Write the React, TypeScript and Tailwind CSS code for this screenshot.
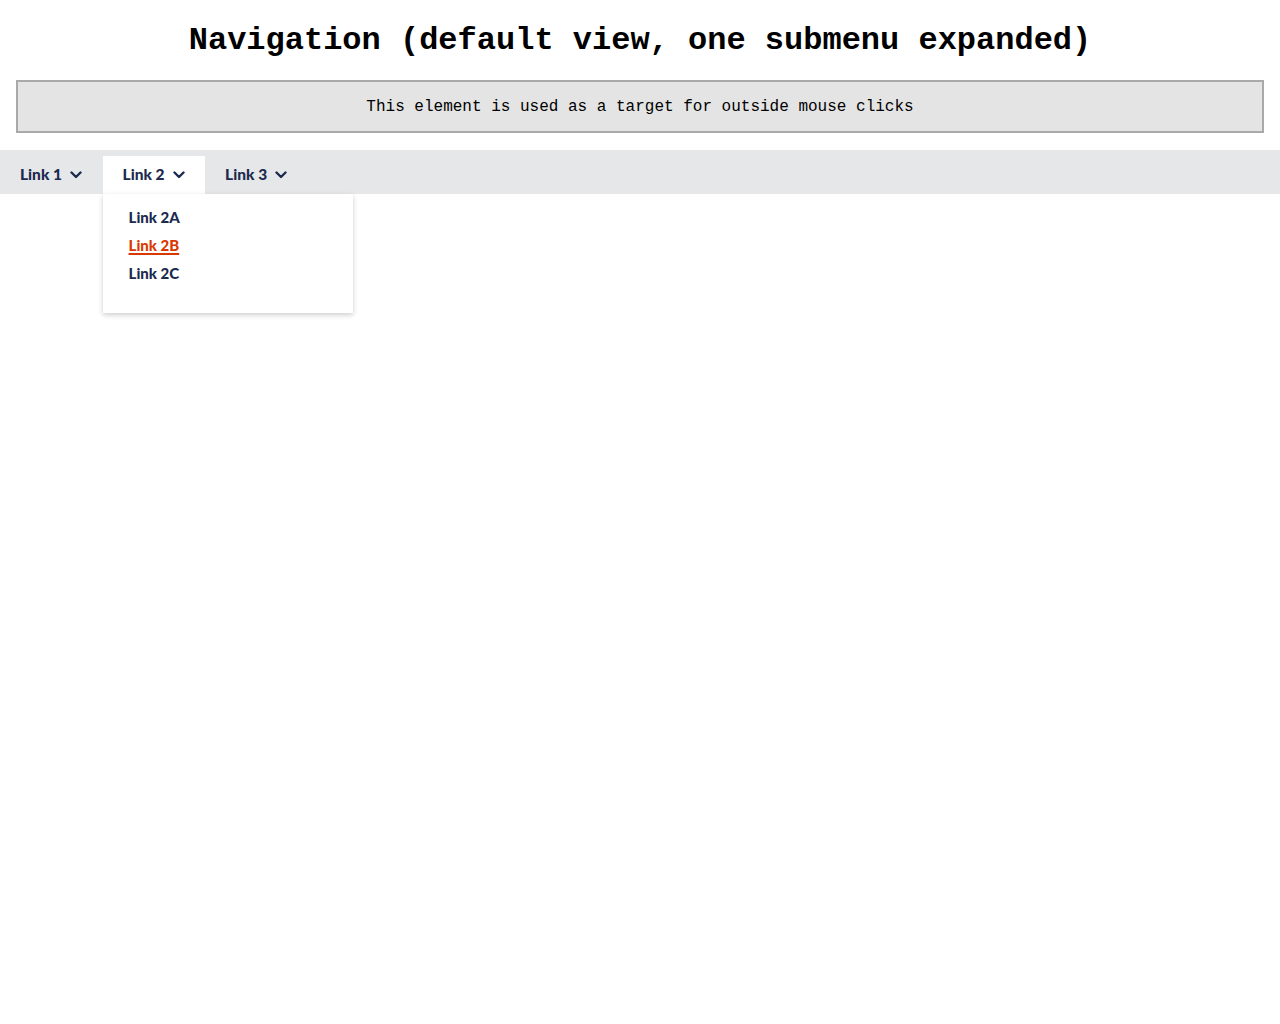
import React, { useState } from "react";

const Chevron: React.FC = () => (
  <svg width="12" height="8" viewBox="0 0 12 8" fill="none" className="ml-2">
    <path d="M1.5 1.5 L6 6 L10.5 1.5" stroke="#1b2a4e" strokeWidth="2.4" strokeLinecap="round" strokeLinejoin="round" />
  </svg>
);

const submenu: Record<string, string[]> = {
  "Link 1": ["Link 1A", "Link 1B", "Link 1C"],
  "Link 2": ["Link 2A", "Link 2B", "Link 2C"],
  "Link 3": ["Link 3A", "Link 3B", "Link 3C"],
};

const App: React.FC = () => {
  const [open, setOpen] = useState<string | null>("Link 2");

  return (
    <div className="min-h-screen bg-white">
      <h1 className="pt-[22px] text-center text-[32px] font-bold leading-[38px] text-black [font-family:'Liberation_Mono',monospace]">
        Navigation (default view, one submenu expanded)
      </h1>
      <div className="mx-4 mt-[20px] flex h-[53px] items-center justify-center border-2 border-[#a9a9a9] bg-[#e4e4e4] text-[16px] text-black [font-family:'Liberation_Mono',monospace]">
        This element is used as a target for outside mouse clicks
      </div>
      <nav className="mt-[17px] flex h-11 items-end bg-[#e6e7e9] [font-family:Lato,sans-serif]">
        {Object.keys(submenu).map((label) => (
          <div key={label} className="relative">
            <button
              onClick={() => setOpen(open === label ? null : label)}
              className={
                "flex h-[38px] items-center px-5 pb-[1px] pr-[20.5px] text-[15.5px] font-black text-[#1b2a4e] " +
                (open === label ? "bg-white" : "")
              }
            >
              {label}
              <Chevron />
            </button>
            {open === label && (
              <ul className="absolute left-0 top-[38px] z-10 w-[250px] bg-white pt-[9px] pb-[26px] pl-[26px] shadow-[0_2px_5px_rgba(0,0,0,0.2)]">
                {submenu[label].map((item) => (
                  <li key={item} className="flex h-7 items-center">
                    <a
                      href="#"
                      className={
                        "text-[15px] font-black " +
                        (item === "Link 2B"
                          ? "text-[#d93800] underline decoration-2 underline-offset-2"
                          : "text-[#1b2a4e]")
                      }
                    >
                      {item}
                    </a>
                  </li>
                ))}
              </ul>
            )}
          </div>
        ))}
      </nav>
    </div>
  );
};

export default App;
